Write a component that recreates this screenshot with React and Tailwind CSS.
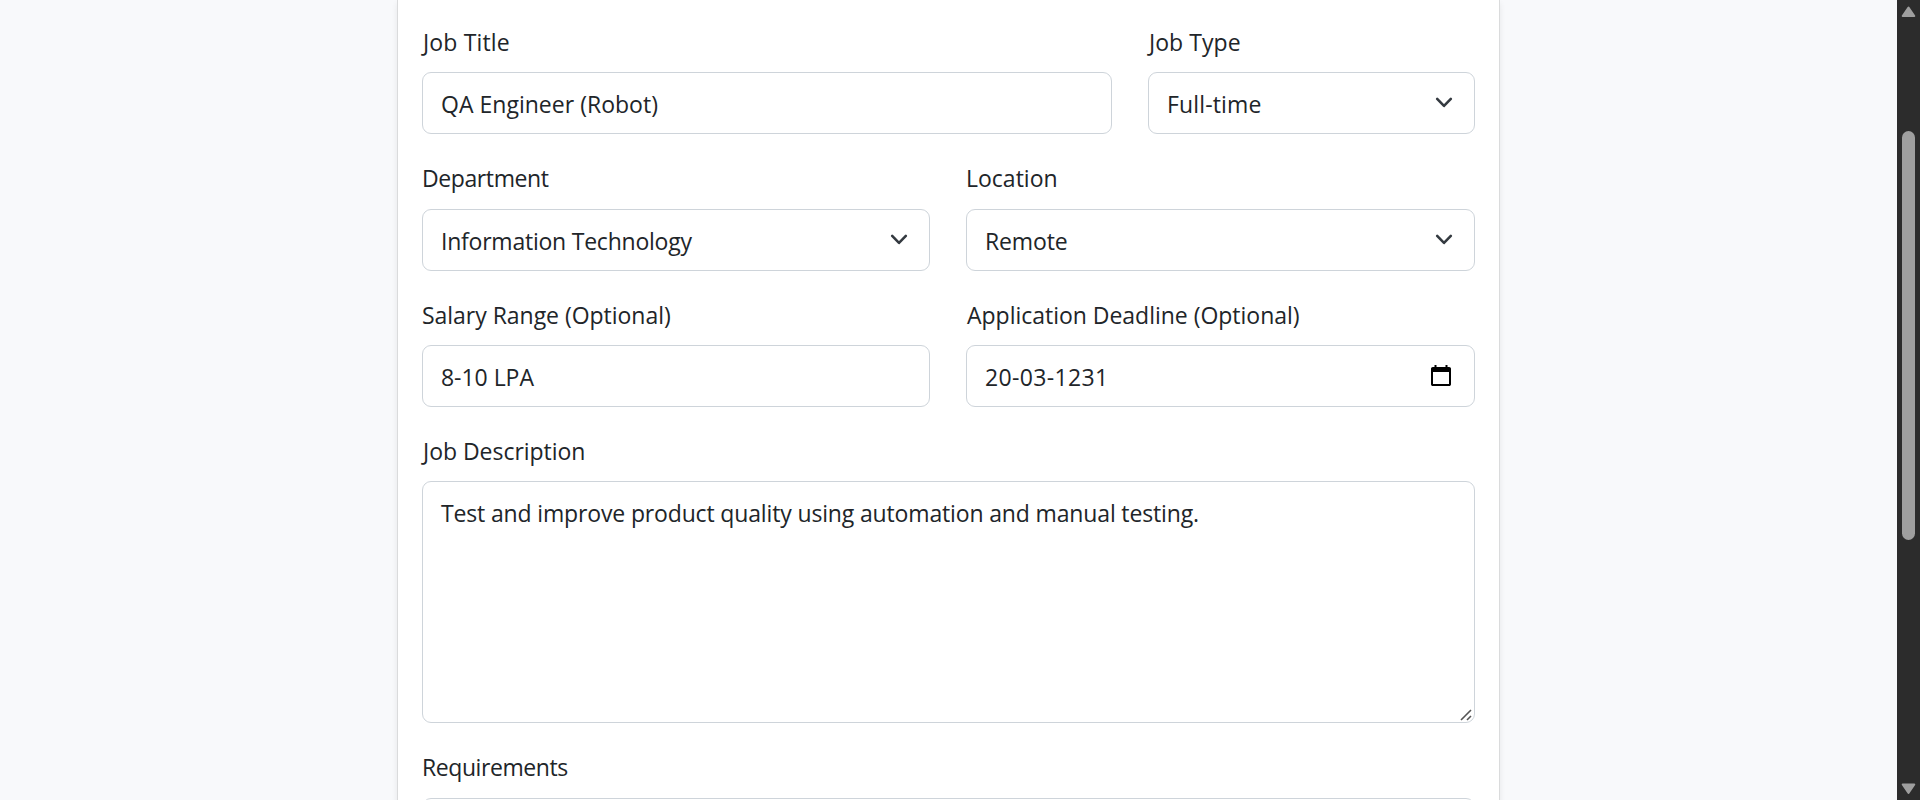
import React from "react";

const box =
  "w-full rounded-[9px] border border-[#ced4da] bg-white text-[#212529]";

function Field({ label, labelClass = "", children, className = "gap-3" }) {
  return (
    <div className={`flex flex-col ${className}`}>
      <label className={`block h-9 whitespace-nowrap leading-9 ${labelClass}`}>{label}</label>
      {children}
    </div>
  );
}

function TextBox({ value, className = "", children }) {
  return (
    <div className={`${box} flex h-[62px] items-start justify-between pt-[13px] pl-[18px] leading-9`}>
      <span className={`whitespace-nowrap ${className}`}>{value}</span>
      {children}
    </div>
  );
}

function Chevron() {
  return (
    <svg className="mt-[5px] mr-[18px] h-6 w-6" viewBox="0 0 16 16" fill="none">
      <path
        d="m3.2 5.2 4.8 5 4.8-5"
        transform="translate(0.4 0.3) scale(0.95)"
        stroke="#343a40"
        strokeLinecap="round"
        strokeLinejoin="round"
        strokeWidth="1.8"
      />
    </svg>
  );
}

function SelectBox({ value, className }) {
  return (
    <TextBox value={value} className={className}>
      <Chevron />
    </TextBox>
  );
}

function CalendarIcon() {
  return (
    <svg className="mt-[6px] mr-[23px] h-[22px] w-5" viewBox="0 0 20 22">
      <path
        fill="#000"
        fillRule="evenodd"
        d="M3.5 0h2v2h9V0h2v2h1.7c1 0 1.8.8 1.8 1.8v15.4c0 1-.8 1.8-1.8 1.8H1.8C.8 21 0 20.200 0 19.200V3.800C0 2.800.8 2 1.800 2h1.700V0ZM2 7v12h16V7H2Z"
      />
    </svg>
  );
}

function Scrollbar() {
  return (
    <div className="flex h-full w-[23px] shrink-0 flex-col items-center bg-[#2c2c2c] pr-px">
      <svg className="mt-[6px] h-[12px] w-[15px] shrink-0" viewBox="0 0 15 12">
        <path d="M7.500 1.500 13.300 10H1.700Z" fill="#9f9f9f" stroke="#9f9f9f" strokeWidth="2" strokeLinejoin="round" />
      </svg>
      <div className="mt-[113px] h-[409px] w-[13px] shrink-0 rounded-full bg-[#9f9f9f]" />
      <svg className="mt-auto mb-[5px] h-[12px] w-[15px] shrink-0" viewBox="0 0 15 12">
        <path d="M7.500 10 13.300 1.500H1.700Z" fill="#9f9f9f" stroke="#9f9f9f" strokeWidth="2" strokeLinejoin="round" />
      </svg>
    </div>
  );
}

export default function App() {
  return (
    <div className="flex h-[800px] w-full overflow-hidden bg-[#f8f9fb] font-['Open_Sans','Noto_Sans',sans-serif] text-[23px] text-[#212529]">
      <main className="flex h-full min-w-0 flex-1 justify-center">
        <form className="h-[840px] w-[1103px] border-x border-[#dadbdc] bg-white px-6 pt-6 shadow-[0_3px_6px_rgba(0,0,0,0.075)]">
          <div className="flex flex-col gap-[26px]">
            <div className="flex gap-9">
              <Field label="Job Title" labelClass="pl-px tracking-[0.16px]" className="w-[690px] gap-3">
                <TextBox value="QA Engineer (Robot)" className="tracking-[0.02px]" />
              </Field>
              <Field label="Job Type" labelClass="pl-px tracking-[0.05px]" className="flex-1 gap-3">
                <SelectBox value="Full-time" className="tracking-[0.15px]" />
              </Field>
            </div>
            <div className="grid grid-cols-[508px_1fr] gap-9">
              <Field label="Department" labelClass="tracking-[-0.4px]" className="gap-[13px]">
                <SelectBox value="Information Technology" className="tracking-[-0.23px]" />
              </Field>
              <Field label="Location" labelClass="tracking-[0px]" className="gap-[13px]">
                <SelectBox value="Remote" className="tracking-[-0.15px]" />
              </Field>
            </div>
            <div className="grid grid-cols-[508px_1fr] gap-9">
              <Field label="Salary Range (Optional)" labelClass="tracking-[-0.03px]">
                <TextBox value="8-10 LPA" className="tracking-[-0.04px]" />
              </Field>
              <Field label="Application Deadline (Optional)" labelClass="pl-px tracking-[-0.02px]">
                <TextBox value="20-03-1231" className="tracking-[0.35px]">
                  <CalendarIcon />
                </TextBox>
              </Field>
            </div>
            <Field label="Job Description" labelClass="pl-px tracking-[-0.03px]">
              <div className={`${box} flex h-[242px] flex-col justify-between pt-[13px] pl-[18px] leading-9`}>
                <p className="whitespace-nowrap tracking-[-0.15px]">
                  Test and improve product quality using automation and manual testing.
                </p>
                <svg className="mr-[2px] mb-px h-3 w-3 self-end" viewBox="0 0 12 12">
                  <path d="M1 11 11 1M7 11l4-4" stroke="#555" strokeWidth="1.6" fill="none" />
                </svg>
              </div>
            </Field>
            <Field label="Requirements" labelClass="tracking-[-0.42px]" className="gap-[13px]">
              <div className={`${box} h-[242px]`} />
            </Field>
          </div>
        </form>
      </main>
      <Scrollbar />
    </div>
  );
}
